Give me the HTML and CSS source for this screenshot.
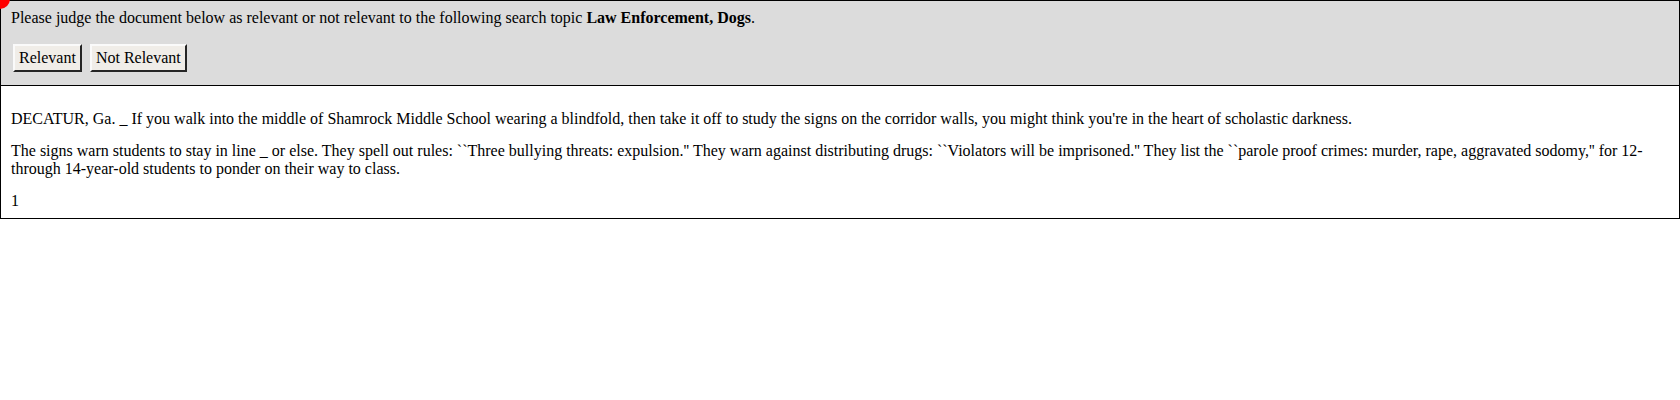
FILE: index.html
```html
<!DOCTYPE html>
<html>
<head>
<meta charset="utf-8">
<link rel="stylesheet" href="styles.css">
</head>
<body>
<div class="marker"></div>
<div class="judge">
  <div class="prompt">Please judge the document below as relevant or not relevant to the following search topic <b>Law Enforcement, Dogs</b>.</div>
  <div class="actions">
    <button class="btn">Relevant</button>
    <button class="btn">Not Relevant</button>
  </div>
</div>
<div class="doc">
  <p>DECATUR, Ga. _ If you walk into the middle of Shamrock Middle School wearing a blindfold, then take it off to study the signs on the corridor walls, you might think you're in the heart of scholastic darkness.</p>
  <p>The signs warn students to stay in line _ or else. They spell out rules: ``Three bullying threats: expulsion.'' They warn against distributing drugs: ``Violators will be imprisoned.'' They list the ``parole proof crimes: murder, rape, aggravated sodomy,'' for 12- through 14-year-old students to ponder on their way to class.</p>
  <p class="last">1</p>
</div>
</body>
</html>
```
FILE: styles.css
```css
html, body {
  margin: 0;
  padding: 0;
  background: #fff;
}
body {
  font-family: "Liberation Serif", "Times New Roman", serif;
  font-size: 16px;
  line-height: 18px;
  color: #000;
  position: relative;
}
.marker {
  position: absolute;
  left: -10px;
  top: -11px;
  width: 20px;
  height: 20px;
  border-radius: 50%;
  background: #ff0000;
  z-index: 2;
}
.judge {
  border: 1px solid #000;
  background: #dcdcdc;
  padding: 8px 10px 13px;
}
.prompt {
  margin: 0;
}
.actions {
  display: flex;
  gap: 8px;
  margin-top: 17px;
  padding-left: 2px;
}
.btn {
  font-family: "Liberation Serif", "Times New Roman", serif;
  font-size: 16px;
  line-height: 18px;
  color: #000;
  background: #f0ede8;
  border: 2px outset #c8c8c8;
  border-color: #fafafa #7a7a7a #7a7a7a #fafafa;
  padding: 3px 4px;
  height: 28px;
  margin: 0;
  border-radius: 0;
}
.doc {
  border: 1px solid #000;
  border-top: none;
  padding: 24px 10px 8px;
}
.doc p {
  margin: 0 0 14px;
}
.doc p.last {
  margin: 0;
}
```
